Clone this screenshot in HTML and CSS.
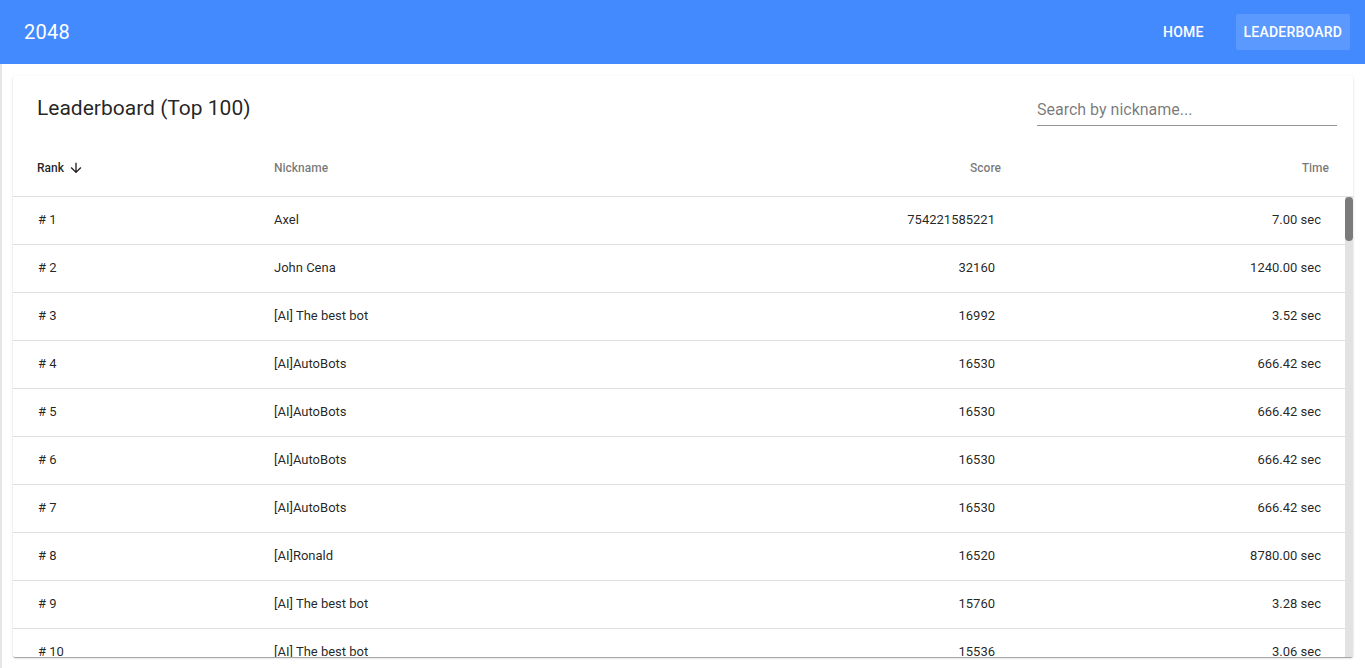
FILE: index.html
```html
<!DOCTYPE html>
<html lang="en">
<head>
<meta charset="utf-8">
<title>2048 - Leaderboard</title>
<link rel="stylesheet" href="styles.css">
</head>
<body>
<header class="topbar">
  <div class="brand">2048</div>
  <nav class="nav">
    <a class="nav-btn">HOME</a>
    <a class="nav-btn active">LEADERBOARD</a>
  </nav>
</header>
<main class="main">
  <section class="card">
    <div class="card-head">
      <h1 class="title">Leaderboard (Top 100)</h1>
      <div class="search"><input class="search-input" type="text" placeholder="Search by nickname..."></div>
    </div>
    <div class="thead">
      <div class="th sorted">Rank
        <svg class="sort-icon" viewBox="0 0 24 24" width="16" height="16"><path d="M20 12l-1.41-1.41L13 16.17V4h-2v12.17l-5.58-5.59L4 12l8 8 8-8z" fill="currentColor"/></svg>
      </div>
      <div class="th">Nickname</div>
      <div class="th num">Score</div>
      <div class="th num">Time</div>
    </div>
    <div class="tbody-wrap">
      <div class="tbody">
        <div class="tr"><div class="td rank"># 1</div><div class="td">Axel</div><div class="td num">754221585221</div><div class="td num">7.00 sec</div></div>
        <div class="tr"><div class="td rank"># 2</div><div class="td">John Cena</div><div class="td num">32160</div><div class="td num">1240.00 sec</div></div>
        <div class="tr"><div class="td rank"># 3</div><div class="td">[AI] The best bot</div><div class="td num">16992</div><div class="td num">3.52 sec</div></div>
        <div class="tr"><div class="td rank"># 4</div><div class="td">[AI]AutoBots</div><div class="td num">16530</div><div class="td num">666.42 sec</div></div>
        <div class="tr"><div class="td rank"># 5</div><div class="td">[AI]AutoBots</div><div class="td num">16530</div><div class="td num">666.42 sec</div></div>
        <div class="tr"><div class="td rank"># 6</div><div class="td">[AI]AutoBots</div><div class="td num">16530</div><div class="td num">666.42 sec</div></div>
        <div class="tr"><div class="td rank"># 7</div><div class="td">[AI]AutoBots</div><div class="td num">16530</div><div class="td num">666.42 sec</div></div>
        <div class="tr"><div class="td rank"># 8</div><div class="td">[AI]Ronald</div><div class="td num">16520</div><div class="td num">8780.00 sec</div></div>
        <div class="tr"><div class="td rank"># 9</div><div class="td">[AI] The best bot</div><div class="td num">15760</div><div class="td num">3.28 sec</div></div>
        <div class="tr"><div class="td rank"># 10</div><div class="td">[AI] The best bot</div><div class="td num">15536</div><div class="td num">3.06 sec</div></div>
      </div>
      <div class="scrollbar"><div class="thumb"></div></div>
    </div>
  </section>
</main>
</body>
</html>
```
FILE: styles.css
```css
* { box-sizing: border-box; }
html, body { margin: 0; padding: 0; height: 100%; overflow: hidden; }
body {
  font-family: Roboto, "Liberation Sans", sans-serif;
  color: rgba(0,0,0,.87);
  background: #fff;
}
.topbar {
  height: 64px;
  background: #448aff;
  color: #fff;
  display: flex;
  align-items: center;
  justify-content: space-between;
  padding: 0 15px 0 24px;
}
.brand { font-size: 20px; font-weight: 400; letter-spacing: .3px; }
.nav { display: flex; gap: 24px; align-items: center; }
.nav-btn {
  font-size: 14px;
  font-weight: 500;
  letter-spacing: .2px;
  height: 36px;
  line-height: 36px;
  padding: 0 8px;
  border-radius: 2px;
  color: #fff;
  cursor: pointer;
}
.nav-btn.active { background: rgba(255,255,255,.13); }
.main {
  height: calc(100% - 64px);
  padding: 12px 12px 11px 11px;
  border-left: 2px solid #e6e6e6;
}
.card {
  height: 100%;
  background: #fff;
  border-radius: 2px;
  box-shadow: 0 2px 1px -1px rgba(0,0,0,.2), 0 1px 1px 0 rgba(0,0,0,.14), 0 1px 3px 0 rgba(0,0,0,.12);
  display: flex;
  flex-direction: column;
  overflow: hidden;
}
.card-head {
  height: 64px;
  display: flex;
  justify-content: space-between;
  align-items: flex-start;
  padding: 0 16px 0 24px;
}
.title {
  margin: 19px 0 0;
  font-size: 21px;
  font-weight: 400;
  line-height: 26px;
  color: rgba(0,0,0,.87);
}
.search { width: 300px; margin-top: 23px; }
.search-input {
  width: 100%;
  border: none;
  border-bottom: 1px solid rgba(0,0,0,.42);
  outline: none;
  font-family: inherit;
  font-size: 16px;
  padding: 0 0 5px;
  height: 27px;
  color: rgba(0,0,0,.87);
  background: transparent;
}
.search-input::placeholder { color: rgba(0,0,0,.54); }
.thead {
  height: 57px;
  display: grid;
  grid-template-columns: 237px 500px 227px 1fr;
  align-items: center;
  padding: 0 24px;
  border-bottom: 1px solid #e0e0e0;
  font-size: 12px;
  font-weight: 500;
  color: rgba(0,0,0,.54);
}
.th { display: flex; align-items: center; }
.th.sorted { color: rgba(0,0,0,.87); }
.sort-icon { margin-left: 4px; }
.th.num { justify-content: flex-end; }
.tbody-wrap {
  flex: 1;
  min-height: 0;
  display: flex;
}
.tbody {
  flex: 1;
  overflow: hidden;
  font-size: 13px;
}
.scrollbar {
  width: 8px;
  background: #e2e2e2;
}
.thumb {
  height: 44px;
  background: #7b7b7b;
  border-radius: 4px;
}
.tr {
  height: 48px;
  display: grid;
  grid-template-columns: 237px 494px 227px 1fr;
  align-items: center;
  padding: 0 24px 2px;
  border-bottom: 1px solid #e0e0e0;
}
.td.rank { padding-left: 1px; }
.td.num { text-align: right; }
```
